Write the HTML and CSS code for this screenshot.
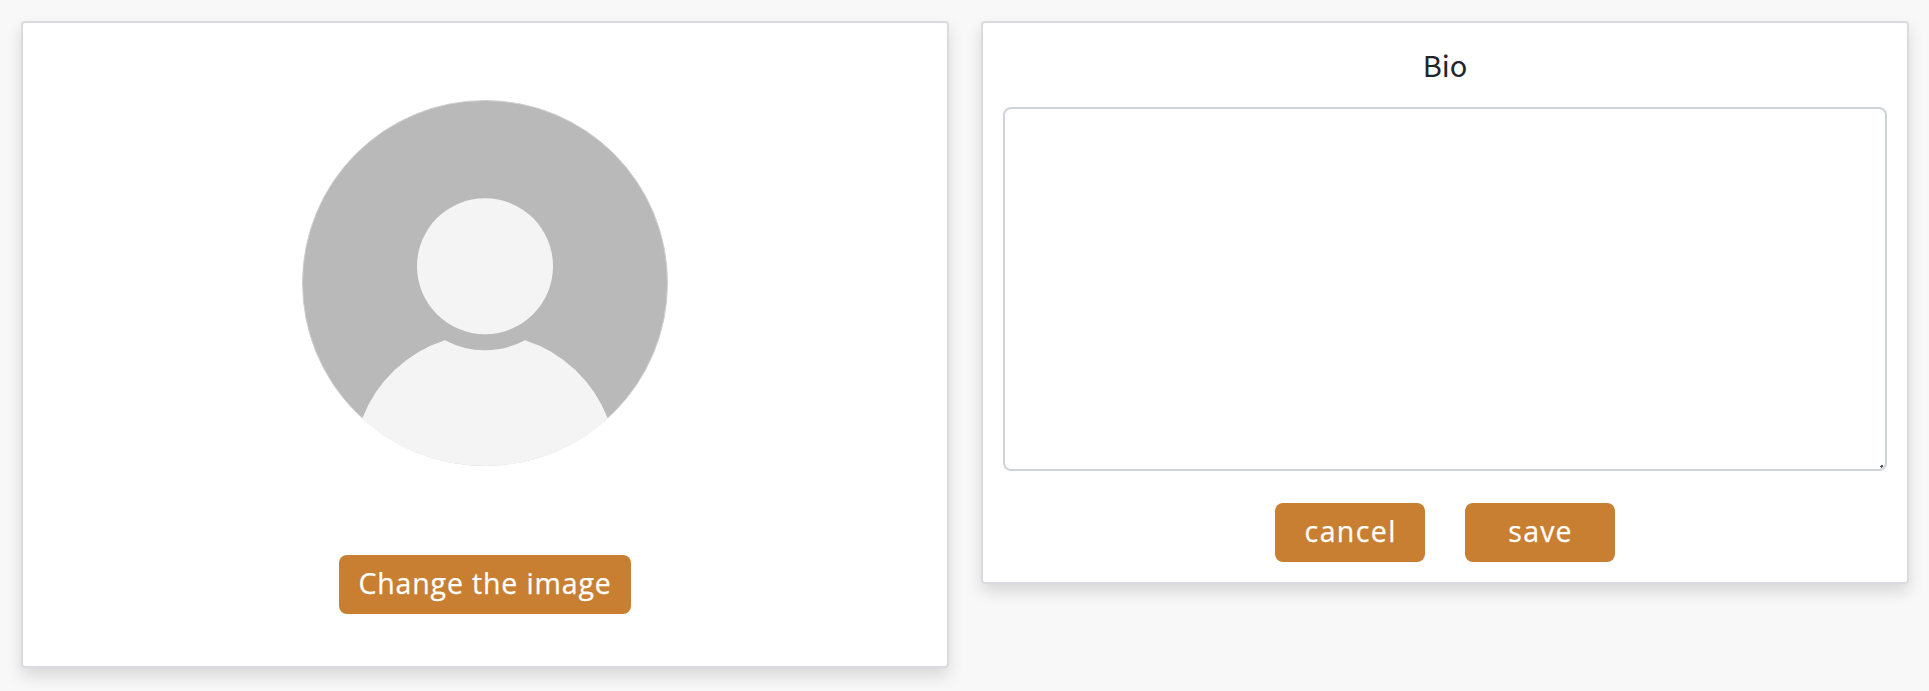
FILE: index.html
```html
<!DOCTYPE html>
<html lang="en">
<head>
<meta charset="utf-8">
<title>Profile</title>
<link rel="stylesheet" href="styles.css">
</head>
<body>
<main class="profile">
  <section class="card card-photo">
    <svg class="avatar" viewBox="0 0 366 366" role="img" aria-label="Profile image">
      <defs><clipPath id="disc"><circle cx="183" cy="183" r="183"/></clipPath></defs>
      <circle cx="183" cy="183" r="182.5" fill="#b9b9b9" stroke="#cfcfcf" stroke-width="1"/>
      <g clip-path="url(#disc)">
        <path d="M60.2 318.6A131.2 131.2 0 0 1 143 240.2A85 85 0 0 0 223 240.2A131.2 131.2 0 0 1 305.8 318.6L330 366H36Z" fill="#f4f4f4"/>
      </g>
      <circle cx="183" cy="166.2" r="68" fill="#f4f4f4"/>
    </svg>
    <button class="btn" type="button"><span class="label-change">Change the image</span></button>
  </section>
  <section class="card card-bio">
    <label class="title" for="bio">Bio</label>
    <div class="field">
      <textarea class="bio" id="bio"></textarea>
      <svg class="grip" viewBox="0 0 3 3" aria-hidden="true"><path d="M1 0h2v2H2v1H1V2H0V1h1z" fill="#555"/></svg>
    </div>
    <div class="actions">
      <button class="btn btn-action" type="button"><span class="label-cancel">cancel</span></button>
      <button class="btn btn-action" type="button"><span class="label-save">save</span></button>
    </div>
  </section>
</main>
</body>
</html>
```
FILE: styles.css
```css
* { box-sizing: border-box; }
body {
  margin: 0;
  background: #f8f8f8;
  color: #212529;
  font-family: "Noto Sans CJK SC", "Noto Sans", sans-serif;
  overflow: hidden;
}
.profile {
  display: grid;
  grid-template-columns: 928px 928px;
  column-gap: 32px;
  align-items: start;
  padding: 21px;
}
.card {
  display: flex;
  flex-direction: column;
  align-items: center;
  background: #fff;
  border: 2px solid #dadae0;
  border-radius: 4px;
  box-shadow: 0 8px 16px rgba(0, 0, 0, .13);
}
.card-photo { height: 647px; padding-top: 77px; gap: 89px; }
.card-bio { height: 563px; padding: 20px; }
.avatar { width: 366px; height: 366px; flex: none; }
.title { font-size: 29px; line-height: 43px; height: 64px; }
.field { position: relative; }
.bio {
  display: block;
  width: 884px;
  height: 364px;
  margin: 0;
  padding: 12px 24px;
  border: 2px solid #ced4da;
  border-radius: 8px;
  background: #fff;
  font: inherit;
  font-size: 30px;
  resize: none;
}
.grip {
  position: absolute;
  right: 4px;
  bottom: 3px;
  width: 3px;
  height: 3px;
}
.actions { display: flex; gap: 40px; padding-top: 32px; }
.btn {
  height: 59px;
  width: 292px;
  padding: 0 0 2px;
  border: 0;
  border-radius: 8px;
  background: #c87f32;
  color: #fff;
  font: 28.5px/57px "Open Sans", sans-serif;
  -webkit-text-stroke: .25px #fff;
  white-space: nowrap;
}
.btn-action { width: 150px; }
.label-change { letter-spacing: .85px; }
.label-cancel { letter-spacing: 1.4px; margin-right: -1.4px; }
.label-save { letter-spacing: 1.2px; margin-right: -1.2px; }
```
